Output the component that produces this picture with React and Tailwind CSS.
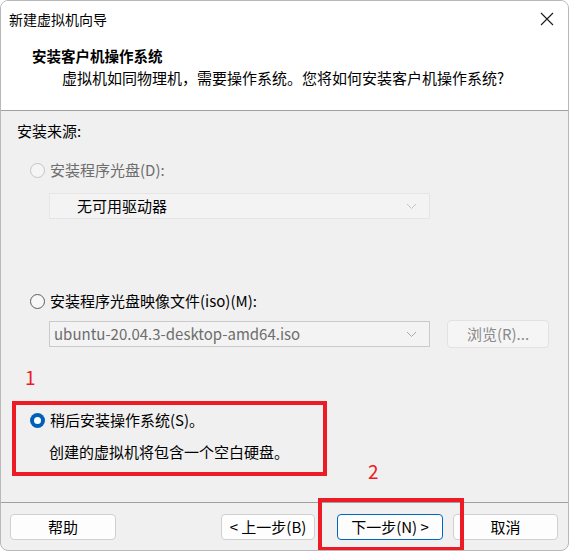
import React from "react";

const font = { fontFamily: '"Microsoft YaHei", "Noto Sans CJK SC", "Noto Sans", sans-serif' };

function Radio({ checked, disabled }) {
  if (checked) {
    return (
      <span className="w-[15px] h-[15px] rounded-full bg-[#005fb8] flex items-center justify-center shrink-0">
        <span className="w-[7px] h-[7px] rounded-full bg-white" />
      </span>
    );
  }
  return (
    <span
      className={
        "w-[15px] h-[15px] rounded-full border shrink-0 " +
        (disabled ? "border-[#c4c4c4] bg-[#f5f5f5]" : "border-[#5e5e5e] bg-[#f7f7f7]")
      }
    />
  );
}

function Chevron({ color }) {
  return (
    <svg width="11" height="7" viewBox="0 0 11 7" fill="none">
      <path d="M1 1l4.5 4.5L10 1" stroke={color} strokeWidth="1" />
    </svg>
  );
}

function Btn({ children, primary, className = "" }) {
  return (
    <div
      className={
        "h-[26px] rounded-[4px] bg-[#fdfdfd] flex items-center justify-center text-[15px] leading-[20px] text-black border " +
        (primary ? "border-[#0067c0] " : "border-[#d0d0d0] ") +
        className
      }
    >
      {children}
    </div>
  );
}

export default function App() {
  return (
    <div className="w-[570px] h-[551px] bg-white" style={font}>
      <div className="relative w-[569px] h-[551px] border border-[#b8b8b8] rounded-[8px] overflow-hidden flex flex-col bg-[#f0f0f0]">
        {/* header */}
        <div className="bg-white h-[110px] border-b border-[#a0a0a0] flex flex-col">
          <div className="h-[36px] flex items-center justify-between pl-[8px] pr-[12px]">
            <span className="text-[14px] text-black">新建虚拟机向导</span>
            <svg width="14" height="14" viewBox="0 0 14 14" className="mr-[2px]">
              <path d="M1 1l12 12M13 1L1 13" stroke="#1a1a1a" strokeWidth="1.1" />
            </svg>
          </div>
          <div className="pl-[31px] pt-[9px] text-[14.5px] font-bold text-black leading-[20px]">安装客户机操作系统</div>
          <div className="pl-[61px] pt-[2px] text-[15px] text-black leading-[20px]">
            虚拟机如同物理机，需要操作系统。您将如何安装客户机操作系统?
          </div>
        </div>

        {/* body */}
        <div className="flex-1 flex flex-col text-[15px] leading-[20px]">
          <div className="pl-[16px] pt-[10px] text-black">安装来源:</div>

          <div className="flex items-center gap-[5px] pl-[29px] mt-[19px] h-[20px]">
            <Radio disabled />
            <span className="text-[#6d6d6d]">安装程序光盘(D):</span>
          </div>
          <div className="ml-[48px] mt-[13px] w-[381px] h-[26px] border border-[#e5e5e5] bg-[#f3f3f3] flex items-center justify-between pl-[27px] pr-[12px]">
            <span className="text-black">无可用驱动器</span>
            <Chevron color="#c4c4c4" />
          </div>

          <div className="flex items-center gap-[5px] pl-[29px] mt-[72px] h-[20px]">
            <Radio />
            <span className="text-black">安装程序光盘映像文件(iso)(M):</span>
          </div>
          <div className="flex items-center mt-[9px] h-[28px]">
            <div className="ml-[48px] w-[381px] h-[26px] border border-[#cacaca] bg-[#f3f3f3] flex items-center justify-between pl-[4px] pr-[12px]">
              <span className="text-[#6d6d6d]">ubuntu-20.04.3-desktop-amd64.iso</span>
              <Chevron color="#a8a8a8" />
            </div>
            <div className="ml-[17px] w-[102px] h-[28px] rounded-[4px] border border-[#e2e2e2] bg-[#f5f5f5] flex items-center justify-center text-[#8a8a8a]">
              浏览(R)...
            </div>
          </div>

          <div className="pl-[24px] mt-[16px] text-[#ed1c24] text-[19px] leading-[26px]">1</div>

          <div className="ml-[11px] mt-[11px] w-[315px] h-[75px] border-[4px] border-[#ed1c24] flex flex-col pl-[14px] pt-[4px]">
            <div className="flex items-center gap-[5px] h-[22px]">
              <Radio checked />
              <span className="text-black">稍后安装操作系统(S)。</span>
            </div>
            <div className="pl-[19px] mt-[11px] text-black">创建的虚拟机将包含一个空白硬盘。</div>
          </div>

          <div className="flex-1" />
        </div>

        {/* footer */}
        <div className="h-[48px] border-t border-[#a0a0a0] relative flex items-start pt-[11px]">
          <Btn className="ml-[9px] w-[106px]">帮助</Btn>
          <Btn className="ml-[105px] w-[94px]">&lt; 上一步(B)</Btn>
          <Btn primary className="ml-[22px] w-[106px]">下一步(N) &gt;</Btn>
          <Btn className="ml-[10px] w-[105px]">取消</Btn>
          <div className="absolute left-[317px] top-[-5px] w-[146px] h-[53px] border-[4px] border-[#ed1c24] pointer-events-none" />
          <div className="absolute left-[367px] top-[-45px] text-[#ed1c24] text-[19px] leading-[26px]">2</div>
        </div>
      </div>
    </div>
  );
}
